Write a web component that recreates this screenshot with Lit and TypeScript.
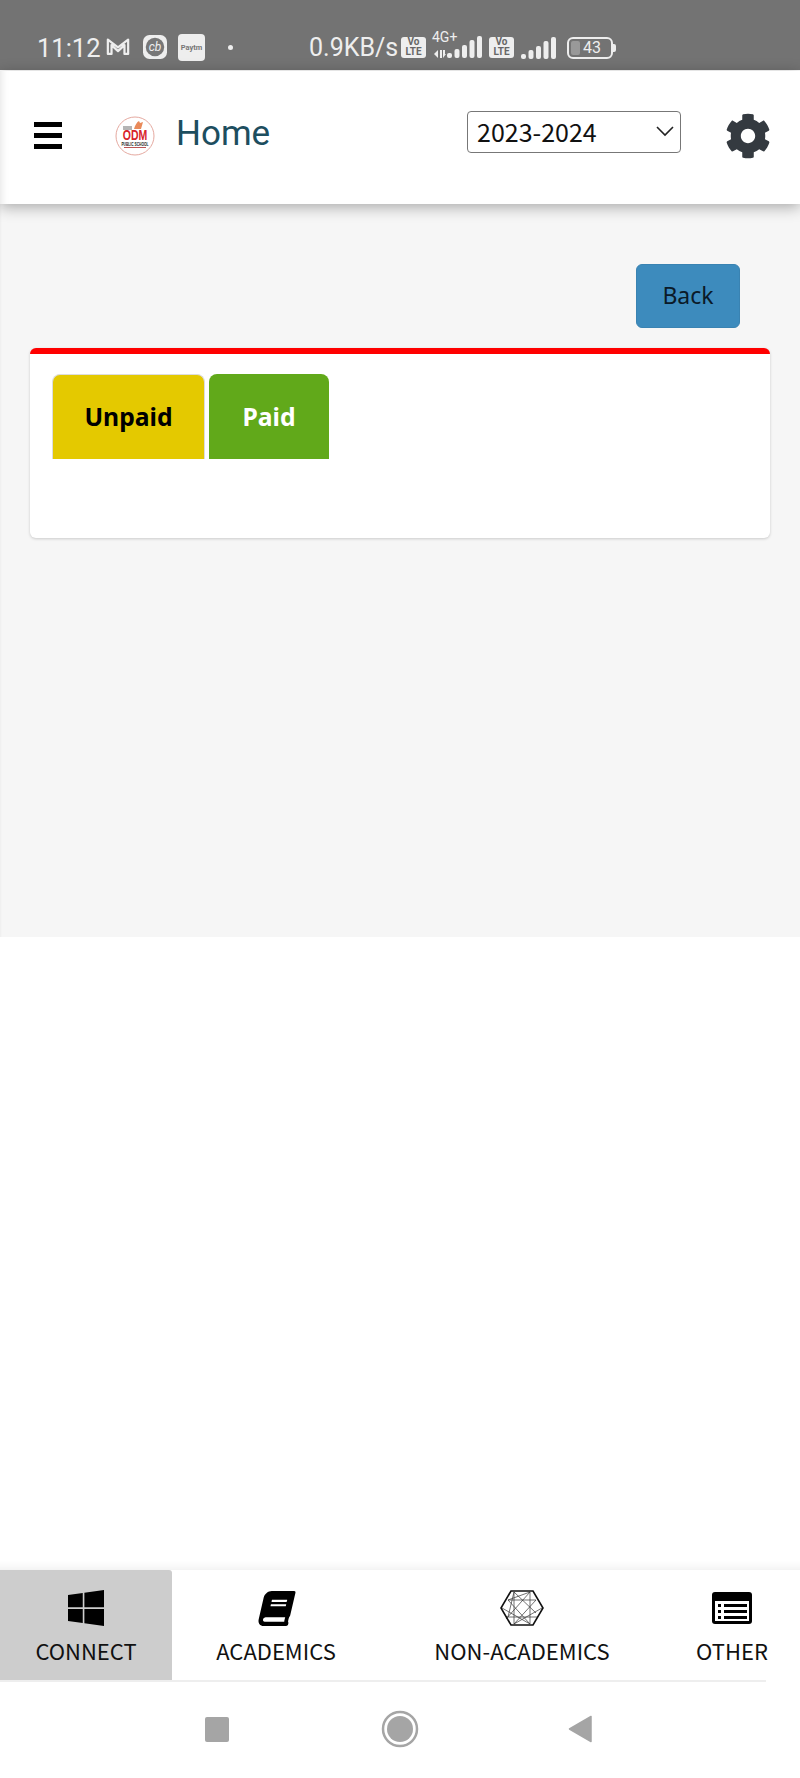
import { LitElement, html, css, svg } from "lit";
import { customElement } from "lit/decorators.js";

const hexLines = [
  [14, 1, 36, 22], [30, 1, 6, 28], [14, 1, 14, 33], [30, 1, 30, 33], [2, 17, 30, 33], [42, 17, 14, 33],
  [8, 9, 36, 9], [6, 26, 38, 26], [14, 1, 8, 26], [30, 1, 8, 9], [8, 9, 30, 33], [36, 9, 14, 33],
];

@customElement("app-root")
export class AppRoot extends LitElement {
  static styles = css`
    :host { display: block; width: 800px; height: 1778px; background: #fff; font-family: "Noto Sans", sans-serif; overflow: hidden; }
    .page { display: flex; flex-direction: column; height: 1778px; }
    .status { height: 70px; flex: none; background: #737373; color: #eeeeee; display: flex; align-items: flex-end; padding: 0 0 7px 37px; box-sizing: border-box; font-family: Roboto, sans-serif; font-size: 25.5px; line-height: 30px; position: relative; }
    .status svg { display: block; flex: none; }
    .s-time { width: 69px; flex: none; }
    .s-mail { margin: 0 13px 7px 0; }
    .s-cb { margin: 0 11px 4px 0; }
    .s-paytm { width: 27px; height: 27px; background: #eeeeee; border-radius: 4px; margin-bottom: 2px; color: #777; font-size: 7.5px; font-weight: 700; line-height: 27px; text-align: center; flex: none; }
    .s-dot { width: 5px; height: 5px; border-radius: 50%; background: #eee; margin: 0 76px 13px 23px; flex: none; }
    .s-speed { width: 92px; flex: none; white-space: nowrap; font-size: 25px; }
    .volte { width: 25px; height: 21px; background: #eee; border-radius: 3px; color: #666; font-size: 10px; line-height: 10px; font-weight: 700; text-align: center; flex: none; box-sizing: border-box; margin: 0 7px 5px 0; }
    .net { width: 49px; height: 24px; position: relative; flex: none; margin: 0 7px 4px 0; }
    .net span { position: absolute; left: -1px; top: -5px; font-size: 14px; line-height: 14px; }
    .net svg { position: absolute; left: 0; top: 0; }
    .batt { width: 46px; height: 22px; border: 2px solid #eee; border-radius: 6px; box-sizing: border-box; margin: 0 0 4px 11px; position: relative; flex: none; font-size: 16px; line-height: 18px; text-align: center; padding-left: 4px; }
    .batt::before { content: ""; position: absolute; left: 2px; top: 2px; bottom: 2px; width: 9px; background: #999; border-radius: 2px; z-index: 0; }
    .batt span { position: relative; }
    .batt-tip { width: 3px; height: 8px; background: #eee; border-radius: 0 2px 2px 0; margin-bottom: 11px; flex: none; }

    header { height: 133px; flex: none; margin-top: 1px; background: #fff; box-shadow: 0 3px 14px rgba(0,0,0,.32), inset 10px 0 10px -10px rgba(0,0,0,.14); display: flex; align-items: center; position: relative; z-index: 1; box-sizing: border-box; padding: 0 29px 4px 34px; }
    .burger { width: 28px; height: 27px; display: flex; flex-direction: column; justify-content: space-between; flex: none; }
    .burger i { display: block; height: 5px; background: #000; }
    .logo { margin: 0 21px 0 53px; flex: none; display: block; }
    .title { font-family: Roboto, sans-serif; font-size: 35px; color: #1d4e5f; flex: 1; line-height: 42px; margin-top: -4px; }
    .select-wrap { position: relative; width: 214px; height: 42px; margin-top: -7px; flex: none; }
    select { appearance: none; -webkit-appearance: none; width: 100%; height: 100%; border: 1px solid #777; border-radius: 4px; background: #fff; color: #111; font-family: "Noto Sans CJK SC", "Noto Sans", sans-serif; font-size: 25px; padding: 0 0 2px 9px; box-sizing: border-box; outline: none; }
    .chev { position: absolute; right: 7px; top: 14px; pointer-events: none; }
    .gear { margin-left: 44px; flex: none; display: block; }

    main { height: 733px; flex: none; background: #f6f6f6; box-shadow: inset 3px 0 3px -3px rgba(0,0,0,.07); box-sizing: border-box; padding: 60px 30px 0; }
    .back-row { display: flex; justify-content: flex-end; padding-right: 30px; }
    .back { width: 104px; height: 64px; background: #3d8bbd; border: 1px solid #3a83b2; border-radius: 6px; font-family: "Noto Sans", sans-serif; font-size: 23px; color: #0b1a28; padding: 0 0 2px; }
    .card { margin-top: 20px; height: 190px; background: #fff; border-top: 6px solid #ff0000; border-radius: 6px; box-shadow: 0 1px 3px rgba(0,0,0,.18); box-sizing: border-box; padding: 20px 22px 0; display: flex; gap: 4px; align-items: flex-start; }
    .tab { height: 85px; display: flex; align-items: center; justify-content: center; font-size: 24.7px; font-weight: 700; border-radius: 8px 8px 0 0; box-sizing: border-box; padding-bottom: 2px; }
    .unpaid { width: 153px; background: #e4c900; color: #000; border: 1px solid #ddd; border-bottom: none; }
    .paid { width: 120px; background: #61a91a; color: #fff; padding-bottom: 0; }

    .spacer { flex: 1; background: #fff; box-shadow: inset 0 -12px 10px -10px rgba(0,0,0,.07); }
    nav.tabs { height: 112px; flex: none; display: grid; grid-template-columns: 172px 208px 284px 136px; background: #fff; position: relative; }
    nav.tabs::after { content: ""; position: absolute; left: 0; width: 766px; bottom: 0; height: 2px; background: #eeeeee; }
    .item { height: 110px; display: flex; flex-direction: column; align-items: center; color: #111; font-family: "Noto Sans CJK SC", "Noto Sans", sans-serif; font-size: 22px; line-height: 30px; padding-top: 19px; box-sizing: border-box; white-space: nowrap; }
    .item.on { background: #cdcdcd; border-radius: 0 3px 0 0; }
    .ic { height: 38px; display: flex; align-items: center; justify-content: center; margin-bottom: 8px; }
    .ic svg { display: block; }
    .sys { height: 96px; flex: none; background: #fff; display: flex; align-items: center; box-sizing: border-box; padding: 0 0 0 205px; }
    .sq { width: 24px; height: 25px; background: #a5a5a5; border-radius: 2px; flex: none; margin-top: -2px; }
    .home { margin: -2px 0 0 152px; flex: none; }
    .backtri { margin: -2px 0 0 149px; flex: none; }
  `;

  private signal(x: number, base: number, tall: number[]) {
    return tall.map((h, i) => svg`<rect x=${x + i * 7.5} y=${base - h} width="5" height=${h} rx="2" fill="#eee"/>`);
  }

  render() {
    return html`
      <div class="page">
        <div class="status">
          <span class="s-time">11:12</span>
          <svg class="s-mail" width="24" height="19" viewBox="0 0 26 20" fill="none" stroke="#eee" stroke-width="2.400" stroke-linejoin="round"><path d="M2 18V2.500L13 11 24 2.500V18h-4V8.500L13 15 6 8.500V18z"/></svg>
          <svg class="s-cb" width="24" height="24" viewBox="0 0 26 26"><rect width="26" height="26" rx="7" fill="#eee"/><circle cx="13" cy="13" r="10" fill="#777"/><text x="13" y="17.500" text-anchor="middle" font-family="Roboto, sans-serif" font-size="13" font-style="italic" fill="#eee">cb</text></svg>
          <span class="s-paytm">Paytm</span>
          <span class="s-dot"></span>
          <span class="s-speed">0.9KB/s</span>
          <span class="volte">Vo<br />LTE</span>
          <div class="net">
            <span>4G+</span>
            <svg width="49" height="24" viewBox="0 0 49 24">
              <path d="M5 15l-4 4 4 4zM7 15v8h2v-8zM10 15v8l3-4h-1v-4z" fill="#eee"/>
              ${this.signal(14, 23, [5, 9, 13, 18, 22])}
            </svg>
          </div>
          <span class="volte">Vo<br />LTE</span>
          <svg style="margin:0 0 4px 0" width="35" height="23" viewBox="0 0 35 23">${this.signal(0, 23, [5, 9, 13, 18, 22])}</svg>
          <div class="batt"><span>43</span></div>
          <span class="batt-tip"></span>
        </div>

        <header>
          <div class="burger"><i></i><i></i><i></i></div>
          <svg class="logo" width="40" height="40" viewBox="0 0 40 40">
            <circle cx="20" cy="20" r="19" fill="#fff" stroke="#e5a9a0" stroke-width="1"/>
            <path d="M19 13c1-4 3-7 5-8l1 2 3-1-2 7z" fill="#e98a5a"/>
            <rect x="8" y="10" width="9" height="4" fill="#b5b5b5"/>
            <text transform="translate(20 24) scale(0.7 1)" text-anchor="middle" font-family="Liberation Sans, sans-serif" font-weight="700" font-size="15" fill="#d8232a">ODM</text>
            <text transform="translate(20 30) scale(0.6 1)" text-anchor="middle" font-family="Liberation Sans, sans-serif" font-weight="700" font-size="5.500" fill="#222">PUBLIC SCHOOL</text>
            <rect x="9" y="31" width="22" height="1" fill="#b55"/>
          </svg>
          <span class="title">Home</span>
          <div class="select-wrap">
            <select aria-label="Year"><option>2023-2024</option></select>
            <svg class="chev" width="18" height="12" viewBox="0 0 18 12" fill="none" stroke="#222" stroke-width="1.600"><path d="M1 2l8 8 8-8"/></svg>
          </div>
          <svg class="gear" width="46" height="46" viewBox="0 0 512 512"><path fill="#343a40" d="M487.4 315.7l-42.6-24.6c4.3-23.2 4.3-47 0-70.2l42.6-24.6c4.9-2.8 7.1-8.6 5.5-14-11.1-35.6-30-67.8-54.7-94.6-3.8-4.1-10-5.1-14.8-2.3L380.8 110c-17.9-15.4-38.5-27.3-60.8-35.1V25.8c0-5.6-3.9-10.5-9.4-11.7-36.7-8.2-74.3-7.8-109.2 0-5.5 1.2-9.4 6.1-9.4 11.7V75c-22.2 7.9-42.8 19.8-60.8 35.1L88.7 85.5c-4.9-2.8-11-1.9-14.8 2.3-24.7 26.7-43.6 58.9-54.7 94.6-1.7 5.4.6 11.2 5.5 14L67.3 221c-4.3 23.2-4.3 47 0 70.2l-42.6 24.6c-4.9 2.8-7.1 8.6-5.5 14 11.1 35.6 30 67.8 54.7 94.6 3.8 4.1 10 5.1 14.8 2.3l42.6-24.6c17.9 15.4 38.5 27.3 60.8 35.1v49.2c0 5.6 3.9 10.5 9.4 11.7 36.7 8.2 74.3 7.8 109.2 0 5.5-1.2 9.4-6.1 9.4-11.7v-49.2c22.2-7.9 42.8-19.8 60.8-35.1l42.6 24.6c4.9 2.8 11 1.9 14.8-2.3 24.7-26.7 43.6-58.9 54.7-94.6 1.5-5.5-.7-11.3-5.6-14.1zM256 336c-44.1 0-80-35.9-80-80s35.9-80 80-80 80 35.9 80 80-35.9 80-80 80z"/></svg>
        </header>

        <main>
          <div class="back-row"><button class="back">Back</button></div>
          <div class="card">
            <div class="tab unpaid">Unpaid</div>
            <div class="tab paid">Paid</div>
          </div>
        </main>

        <div class="spacer"></div>

        <nav class="tabs">
          <div class="item on">
            <div class="ic"><svg width="36" height="36" viewBox="0 32 448 448"><path fill="#000" d="M0 93.7l183.6-25.3v177.4H0V93.7zm0 324.6l183.6 25.3V268.4H0v149.9zm203.8 28L448 480V268.4H203.8v177.9zm0-380.6v180.1H448V32L203.8 65.7z"/></svg></div>
            CONNECT
          </div>
          <div class="item">
            <div class="ic"><svg width="39" height="35" viewBox="0 0 566 512"><path transform="skewX(-13) translate(118 0)" fill="#000" d="M448 360V24c0-13.300-10.700-24-24-24H96C43 0 0 43 0 96v320c0 53 43 96 96 96h328c13.300 0 24-10.700 24-24v-16c0-7.500-3.500-14.300-8.900-18.700-4.200-15.400-4.200-59.300 0-74.700 5.400-4.300 8.900-11.100 8.900-18.600zM128 134c0-3.300 2.700-6 6-6h212c3.300 0 6 2.700 6 6v20c0 3.300-2.700 6-6 6H134c-3.300 0-6-2.700-6-6v-20zm0 64c0-3.300 2.700-6 6-6h212c3.300 0 6 2.700 6 6v20c0 3.300-2.700 6-6 6H134c-3.300 0-6-2.700-6-6v-20zm253.400 250H96c-17.700 0-32-14.300-32-32 0-17.600 14.400-32 32-32h285.400c-1.900 17.100-1.900 46.900 0 64z"/></svg></div>
            ACADEMICS
          </div>
          <div class="item">
            <div class="ic"><svg width="44" height="38" viewBox="0 -1 44 36" fill="none" stroke="#333" stroke-width="0.7">
              ${hexLines.map((l) => svg`<line x1=${l[0]} y1=${l[1]} x2=${l[2]} y2=${l[3]}/>`)}
              <polygon points="11,0 33,0 43,17 33,34 11,34 1,17" stroke="#111" stroke-width="1.600"/>
            </svg></div>
            NON-ACADEMICS
          </div>
          <div class="item">
            <div class="ic"><svg width="40" height="32" viewBox="0 0 40 32"><rect width="40" height="32" rx="3" fill="#000"/><rect x="3" y="9" width="34" height="20" fill="#fff"/><rect x="6" y="12" width="3" height="3" fill="#000"/><rect x="6" y="18" width="3" height="3" fill="#000"/><rect x="6" y="24" width="3" height="3" fill="#000"/><rect x="12" y="12" width="23" height="3" fill="#000"/><rect x="12" y="18" width="23" height="3" fill="#000"/><rect x="12" y="24" width="23" height="3" fill="#000"/></svg></div>
            OTHER
          </div>
        </nav>

        <div class="sys">
          <span class="sq"></span>
          <svg class="home" width="38" height="38" viewBox="0 0 38 38"><circle cx="19" cy="19" r="17" fill="none" stroke="#a5a5a5" stroke-width="2.500"/><circle cx="19" cy="19" r="13" fill="#a5a5a5"/></svg>
          <svg class="backtri" width="24" height="28" viewBox="0 0 24 28"><path d="M23 1.500v25L1.500 14z" fill="#a5a5a5" stroke="#a5a5a5" stroke-width="1.500" stroke-linejoin="round"/></svg>
        </div>
      </div>
    `;
  }
}
